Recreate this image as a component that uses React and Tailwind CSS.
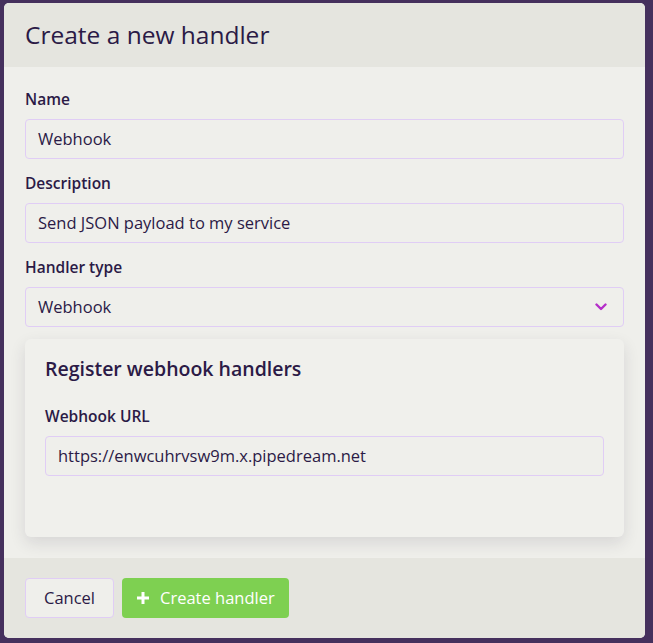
const FONT = "font-['Open_Sans','Noto_Sans',sans-serif]";

function Field({ label, value, children }) {
  return (
    <div className="flex flex-col">
      <label className="mb-[10px] text-[15.5px] font-semibold leading-5 text-[#2b1a46]">{label}</label>
      {children || (
        <div className="flex h-10 items-center rounded-[4px] border border-[#e0cdf5] bg-[#efefeb] px-3 text-[16.5px] text-[#2b1a46]">
          {value}
        </div>
      )}
    </div>
  );
}

export default function App() {
  return (
    <div className={`${FONT} min-h-screen bg-[#45305d] pl-[4px] pr-[8px] pt-[3px] pb-[5px]`}>
      <div className="flex h-[635px] flex-col overflow-hidden rounded-[5px] bg-[#efefeb]">
        {/* Header */}
        <div className="flex h-16 shrink-0 items-center bg-[#e5e5df] px-[21px]">
          <h1 className="text-[24.5px] font-normal text-[#2b1a46]">Create a new handler</h1>
        </div>

        {/* Body */}
        <div className="flex flex-1 flex-col px-[21px] pt-[22px]">
          <Field label="Name" value="Webhook" />
          <div className="h-[14px]" />
          <Field label="Description" value="Send JSON payload to my service" />
          <div className="h-[14px]" />
          <Field label="Handler type">
            <div className="flex h-10 items-center justify-between rounded-[4px] border border-[#e0cdf5] bg-[#efefeb] px-3 text-[16.5px] text-[#2b1a46]">
              <span>Webhook</span>
              <svg width="12" height="8" viewBox="0 0 12 8" fill="none" className="mr-[4px]">
                <path d="M1.5 1.5 L6 6 L10.5 1.5" stroke="#b52fc9" strokeWidth="2.4" strokeLinecap="round" strokeLinejoin="round" />
              </svg>
            </div>
          </Field>

          {/* Card */}
          <div className="mt-3 flex h-[198px] flex-col rounded-[6px] bg-[#f0f0ec] px-5 pt-4 shadow-[0_6px_16px_rgba(40,30,60,0.12)]">
            <h2 className="text-[19.5px] font-semibold leading-7 text-[#2b1a46]">Register webhook handlers</h2>
            <div className="mt-[23px]">
              <Field label="Webhook URL" value="https://enwcuhrvsw9m.x.pipedream.net" />
            </div>
          </div>
        </div>

        {/* Footer */}
        <div className="flex h-20 shrink-0 items-center gap-2 bg-[#e5e5df] px-[21px]">
          <button className="h-10 rounded-[4px] border border-[#e0cdf5] bg-[#efefeb] px-[18px] text-[16.5px] text-[#2b1a46]">
            Cancel
          </button>
          <button className="flex h-10 items-center gap-[10px] rounded-[4px] bg-[#7ed051] px-[14px] text-[16.5px] text-white">
            <svg width="14" height="14" viewBox="0 0 14 14">
              <path d="M7 1 V13 M1 7 H13" stroke="white" strokeWidth="3" />
            </svg>
            <span>Create handler</span>
          </button>
        </div>
      </div>
    </div>
  );
}
